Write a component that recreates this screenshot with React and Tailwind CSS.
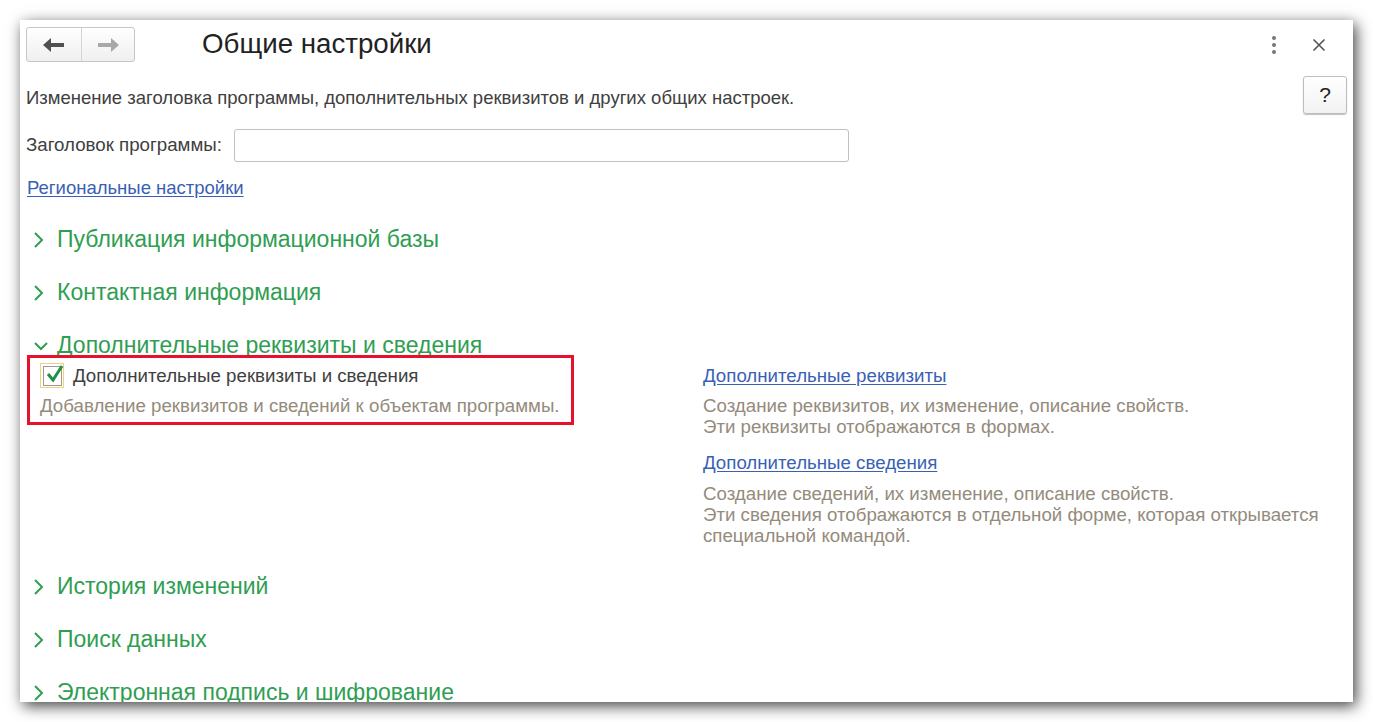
import React from "react";

const font = { fontFamily: '"Liberation Sans", Arial, sans-serif' };

function Chevron({ down }) {
  return down ? (
    <svg width="16" height="12" viewBox="0 0 16 12" className="shrink-0">
      <path d="M2 3 L8 9 L14 3" fill="none" stroke="#2f9e52" strokeWidth="2" />
    </svg>
  ) : (
    <svg width="12" height="18" viewBox="0 0 12 18" className="shrink-0">
      <path d="M2 2 L9 9 L2 16" fill="none" stroke="#2f9e52" strokeWidth="2" />
    </svg>
  );
}

function SectionHeader({ title, down }) {
  return (
    <div className="flex h-[53px] items-center">
      <div className="flex w-[37px] justify-start pl-[13px]">
        <Chevron down={down} />
      </div>
      <span className="text-[23px] leading-none text-[#2f9e52]">{title}</span>
    </div>
  );
}

export default function App() {
  return (
    <div className="h-[722px] w-[1373px] bg-white pl-[20px] pt-[20px]" style={font}>
      <div className="relative h-[682px] w-[1333px] overflow-hidden bg-white shadow-[3px_4px_14px_rgba(0,0,0,0.75)]">
        {/* header */}
        <div className="flex h-[49px] items-start pt-[7px]">
          <div className="ml-[6px] flex h-[35px] w-[109px] overflow-hidden rounded-[3px] border border-[#c6c6c6] bg-gradient-to-b from-white to-[#efefef]">
            <div className="flex w-[55px] items-center justify-center border-r border-[#d4d4d4]">
              <svg width="22" height="14" viewBox="0 0 22 14">
                <polygon points="0,7 8,0 8,5 21,5 21,9 8,9 8,14" fill="#505050" />
              </svg>
            </div>
            <div className="flex flex-1 items-center justify-center">
              <svg width="22" height="14" viewBox="0 0 22 14">
                <polygon points="22,7 14,0 14,5 1,5 1,9 14,9 14,14" fill="#a8a8a8" />
              </svg>
            </div>
          </div>
          <div className="ml-[67px] mt-[2px] text-[27.7px] leading-[30px] text-[#222]">Общие настройки</div>
          <div className="ml-auto mr-[27px] mt-[9px] flex items-center gap-[36px]">
            <div className="flex flex-col gap-[3px]">
              <span className="block h-[4px] w-[4px] rounded-full bg-[#777]" />
              <span className="block h-[4px] w-[4px] rounded-full bg-[#777]" />
              <span className="block h-[4px] w-[4px] rounded-full bg-[#777]" />
            </div>
            <svg width="14" height="14" viewBox="0 0 14 14">
              <path d="M1.5 1.5 L12.5 12.5 M12.5 1.5 L1.5 12.5" stroke="#555" strokeWidth="1.6" />
            </svg>
          </div>
        </div>

        {/* description row */}
        <div className="flex h-[40px] items-start">
          <div className="ml-[6px] mt-[18px] text-[18.5px] leading-[21px] text-[#404040]">
            Изменение заголовка программы, дополнительных реквизитов и других общих настроек.
          </div>
          <div className="ml-auto mr-[6px] mt-[7px] flex h-[38px] w-[44px] items-center justify-center rounded-[3px] border border-[#bdbdbd] bg-gradient-to-b from-white to-[#f2f2f2] text-[21px] text-[#222] shadow-[0_1px_1px_rgba(0,0,0,0.25)]">
            ?
          </div>
        </div>

        {/* input row */}
        <div className="mt-[20px] flex h-[33px] items-center">
          <span className="ml-[6px] w-[202px] whitespace-nowrap text-[18.7px] text-[#404040]">Заголовок программы:</span>
          <div className="ml-[6px] h-[33px] w-[615px] rounded-[3px] border border-[#c0c0c0] bg-white" />
        </div>

        {/* link */}
        <div className="ml-[7px] mt-[16px] h-[20px] text-[18.5px] leading-[20px] text-[#3a5fb5] underline underline-offset-2">
          Региональные настройки
        </div>

        <div className="mt-[15px]">
          <SectionHeader title="Публикация информационной базы" />
          <SectionHeader title="Контактная информация" />
          <SectionHeader title="Дополнительные реквизиты и сведения" down />
        </div>

        {/* expanded section */}
        <div className="flex h-[188px] items-start">
          <div className="ml-[7px] mt-[-17px] h-[70px] w-[547px] shrink-0 border-[3px] border-[#e8112d] pl-[10px] pt-[5px]">
            <div className="flex items-center">
              <div className="flex h-[25px] w-[24px] items-center justify-center border border-[#f0d27a]">
                <div className="relative h-[20px] w-[19px] border border-[#9a9a9a] bg-white">
                  <svg width="20" height="20" viewBox="0 0 20 20" className="absolute left-[1px] top-[-3px]">
                    <path d="M3 10 L8 16 L17 2" fill="none" stroke="#1f9147" strokeWidth="3" />
                  </svg>
                </div>
              </div>
              <span className="ml-[9px] whitespace-nowrap text-[18.7px] leading-[20px] text-[#404040]">
                Дополнительные реквизиты и сведения
              </span>
            </div>
            <div className="mt-[8px] whitespace-nowrap text-[18.7px] leading-[20px] text-[#948b7c]">
              Добавление реквизитов и сведений к объектам программы.
            </div>
          </div>
          <div className="ml-[129px] mt-[-7px] flex flex-col whitespace-nowrap text-[18.7px] leading-[21px]">
            <span className="text-[#3a5fb5] underline underline-offset-2">Дополнительные реквизиты</span>
            <span className="mt-[9px] text-[#948b7c]">Создание реквизитов, их изменение, описание свойств.</span>
            <span className="text-[#948b7c]">Эти реквизиты отображаются в формах.</span>
            <span className="mt-[15px] text-[#3a5fb5] underline underline-offset-2">Дополнительные сведения</span>
            <span className="mt-[10px] text-[#948b7c]">Создание сведений, их изменение, описание свойств.</span>
            <span className="text-[#948b7c]">Эти сведения отображаются в отдельной форме, которая открывается</span>
            <span className="text-[#948b7c]">специальной командой.</span>
          </div>
        </div>

        <div>
          <SectionHeader title="История изменений" />
          <SectionHeader title="Поиск данных" />
          <SectionHeader title="Электронная подпись и шифрование" />
        </div>
      </div>
    </div>
  );
}
